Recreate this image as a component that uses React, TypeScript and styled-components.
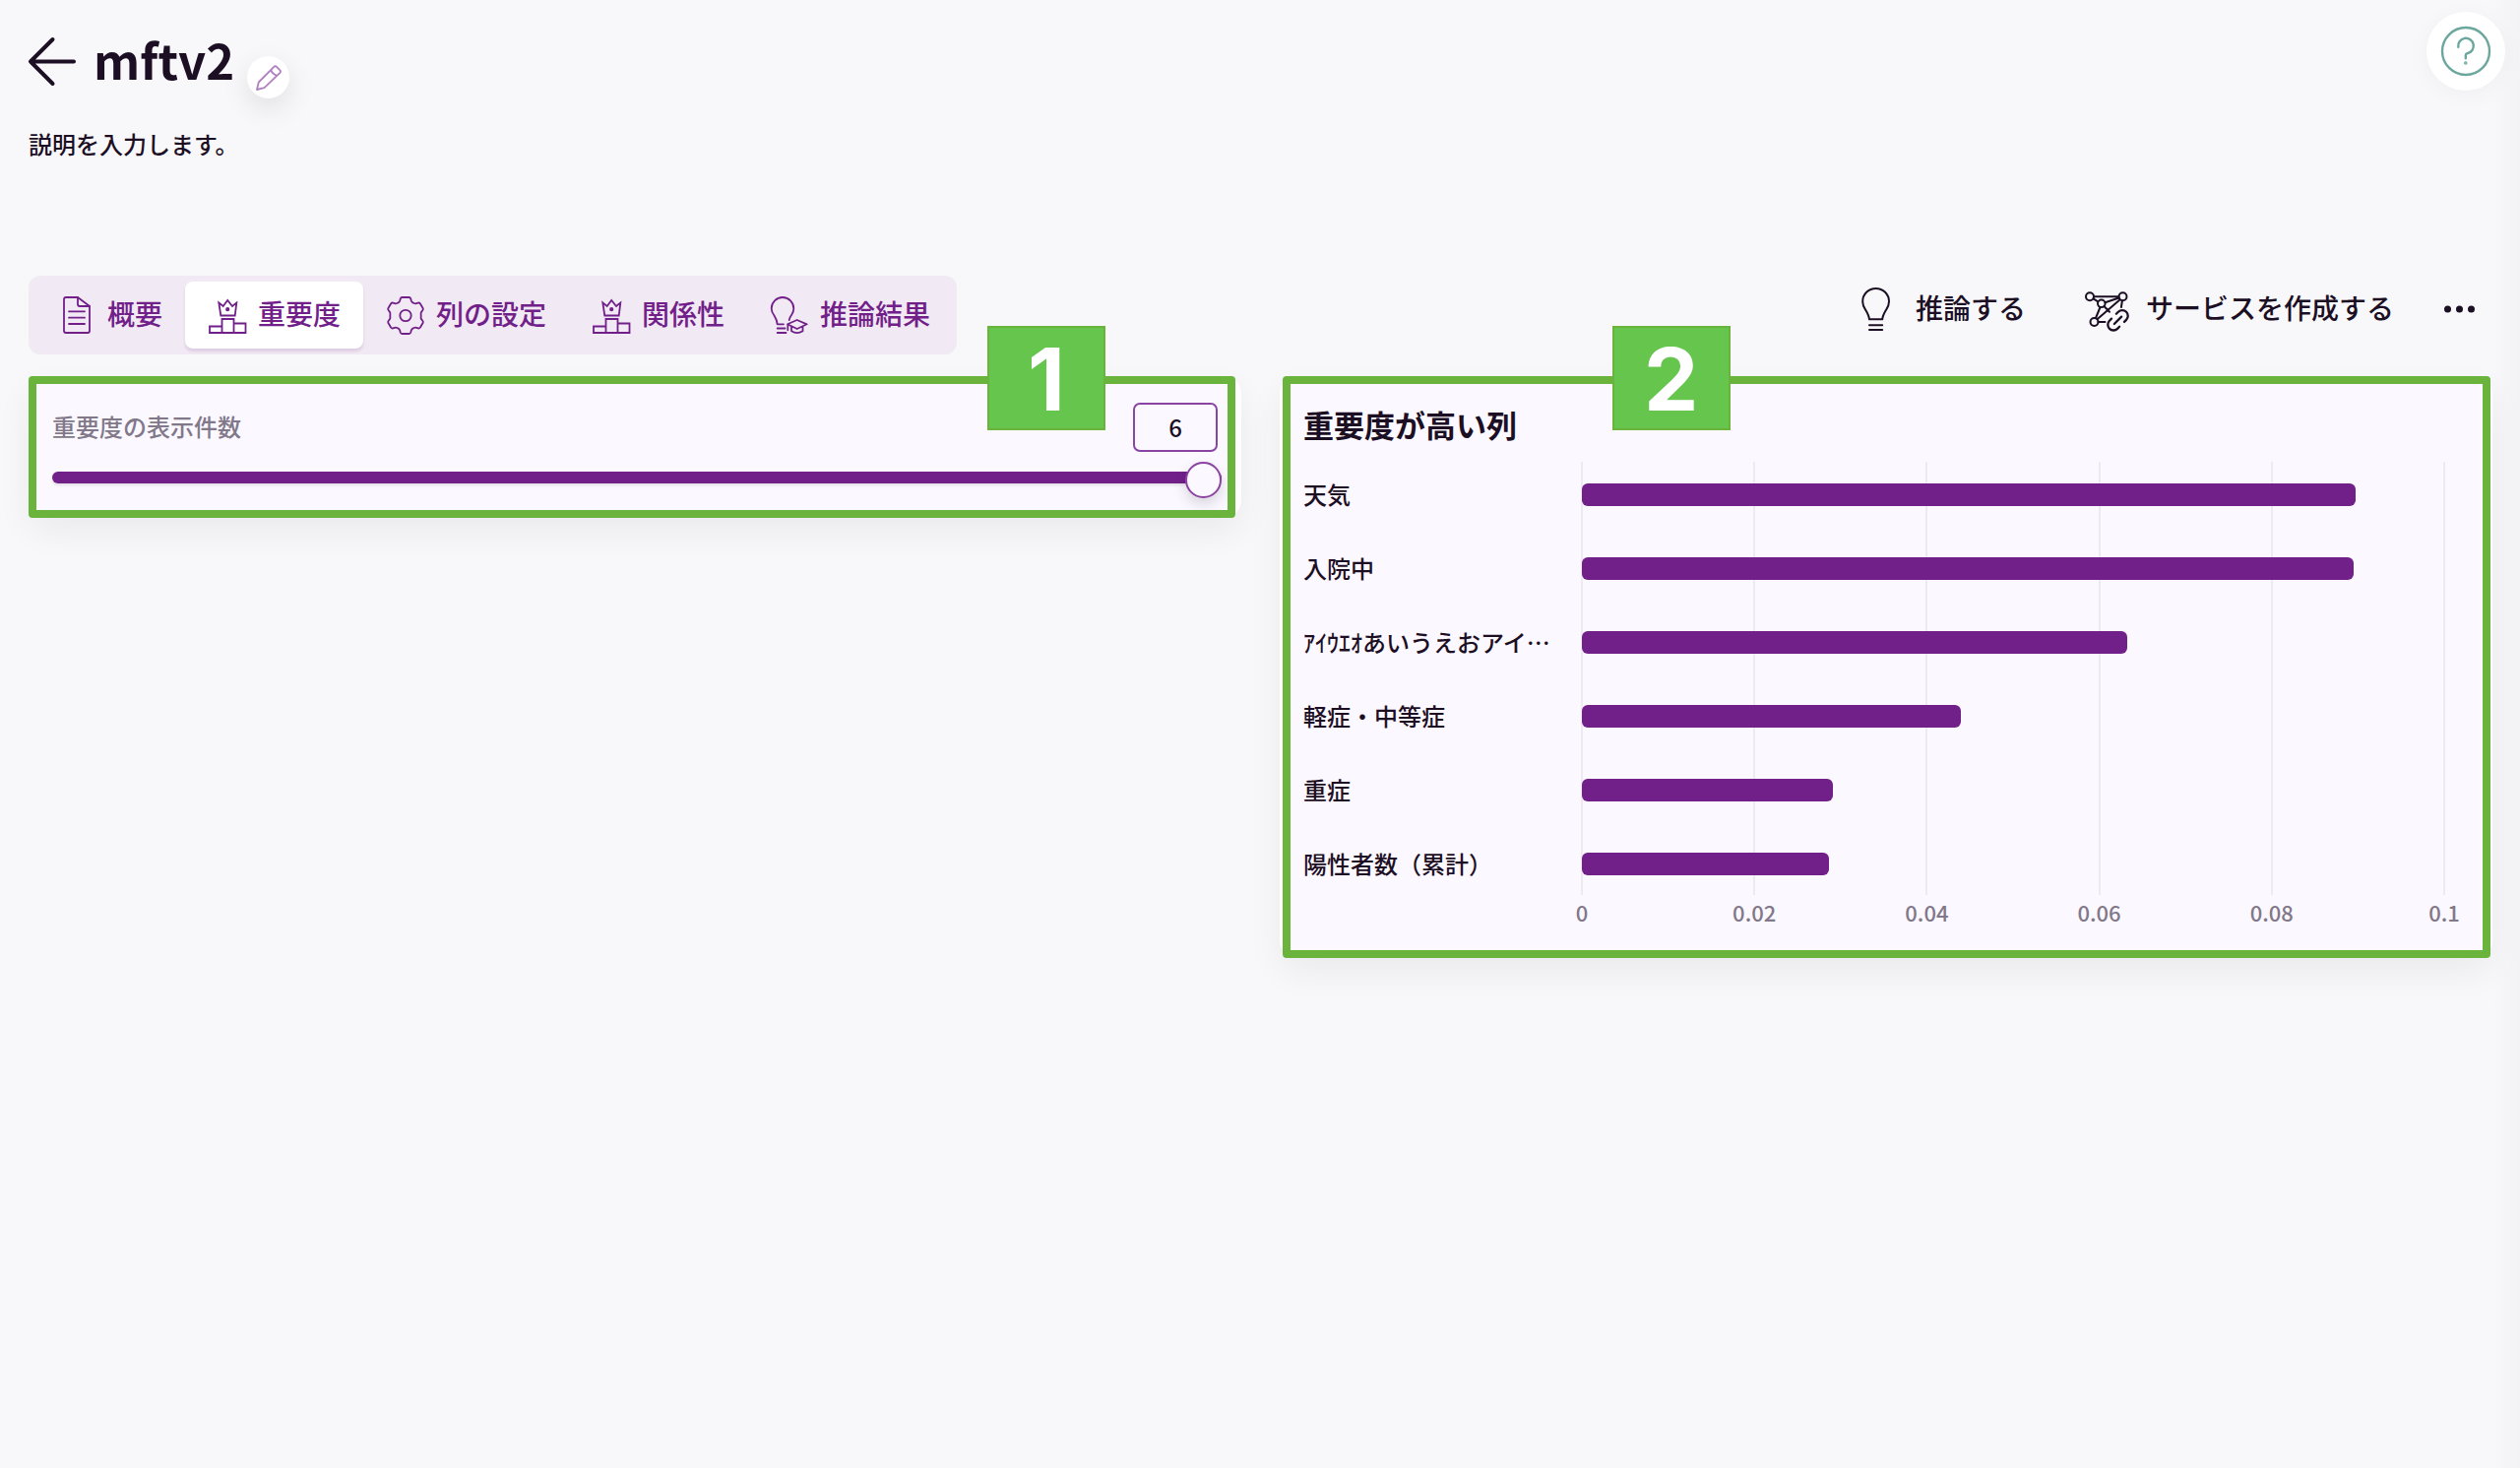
import React, { useState } from 'react';
import styled, { createGlobalStyle } from 'styled-components';

const color = {
  page: '#f8f8fb',
  card: '#fcf8ff',
  ink: '#1c0f24',
  muted: '#81788a',
  purple: '#71208a',
  tabs: '#f1e9f3',
  line: '#efeaf1',
  frame: '#6ab43e',
  badge: '#66c54d',
  teal: '#6ba79d',
};

const GlobalStyle = createGlobalStyle`
  *, *::before, *::after { box-sizing: border-box; }
  body {
    margin: 0;
    min-height: 100vh;
    background: linear-gradient(to left, #f3f3f5, ${color.page} 28px);
    color: ${color.ink};
    font-family: "Noto Sans CJK JP", "Noto Sans", sans-serif;
    font-weight: 500;
  }
  button, input { font: inherit; color: inherit; }
  button { border: 0; padding: 0; background: none; cursor: pointer; }
  h1, h2, p, ul { margin: 0; padding: 0; }
`;

const Page = styled.main`
  padding: 12px 28px 40px 29px;
`;

const Header = styled.header`
  display: flex;
  justify-content: space-between;
  align-items: flex-start;
  margin-right: -13px;
`;

const Heading = styled.div`
  padding-top: 11px;
`;

const TitleRow = styled.div`
  display: flex;
  align-items: center;
  height: 77px;
`;

const BackButton = styled.button`
  display: flex;
  width: 50px;
  height: 50px;
  margin-right: 16px;
`;

const Title = styled.h1`
  font-size: 49px;
  line-height: 72px;
  font-weight: 700;
  padding-bottom: 4px;
`;

const EditButton = styled.button`
  display: flex;
  align-items: center;
  justify-content: center;
  align-self: flex-end;
  width: 43px;
  height: 43px;
  margin-left: 13px;
  border-radius: 50%;
  background: #fff;
  box-shadow: 0 10px 28px rgba(0, 0, 0, 0.1);
`;

const Description = styled.p`
  margin-top: 28px;
  font-size: 24px;
  line-height: 36px;
`;

const HelpButton = styled.button`
  width: 80px;
  height: 80px;
  border-radius: 50%;
  background: #fff;
  box-shadow: 0 4px 24px rgba(0, 0, 0, 0.04);
`;

const Toolbar = styled.div`
  display: flex;
  justify-content: space-between;
  align-items: flex-start;
  margin-top: 116px;
`;

const Tabs = styled.nav`
  display: flex;
  height: 80px;
  padding: 6px 4px 6px 6px;
  border-radius: 12px;
  background: ${color.tabs};
`;

const Tab = styled.button<{ $active: boolean }>`
  display: flex;
  align-items: center;
  gap: 12px;
  padding: 0 23px 0 24px;
  border-radius: 8px;
  color: ${color.purple};
  background: ${(p) => (p.$active ? '#fff' : 'transparent')};
  box-shadow: ${(p) => (p.$active ? '0 3px 3px rgba(113, 32, 138, 0.14)' : 'none')};
`;

const Caption = styled.span`
  font-size: 28px;
  line-height: 40px;
  padding-bottom: 4px;
  white-space: nowrap;
`;

const Actions = styled.div`
  display: flex;
  align-items: center;
  height: 68px;
  padding-right: 11px;
`;

const Action = styled.button`
  display: flex;
  align-items: center;
  gap: 18px;
  margin-right: 60px;

  &:nth-last-child(2) { margin-right: 45px; }
`;

const MoreButton = styled.button`
  display: flex;
  width: 44px;
  height: 44px;
`;

const Panels = styled.div`
  display: grid;
  grid-template-columns: 1fr 1fr;
  align-items: start;
  gap: 39px;
  margin-top: 22px;
`;

const Card = styled.section`
  position: relative;
  border: 6px solid #fff;
  border-radius: 18px;
  background: ${color.card};
  box-shadow: 0 14px 36px rgba(0, 0, 0, 0.06);
`;

const CountCard = styled(Card)`
  padding: 21px 14px 13px 18px;
`;

const ChartCard = styled(Card)`
  padding: 27px 43px 28px 18px;
`;

const Frame = styled.div<{ $left: number; $right: number }>`
  position: absolute;
  top: -6px;
  bottom: -6px;
  left: ${(p) => p.$left - 6}px;
  right: ${(p) => p.$right - 6}px;
  border: 8px solid ${color.frame};
  border-radius: 4px;
  pointer-events: none;
`;

const Badge = styled.span<{ $left: string }>`
  position: absolute;
  top: -57px;
  left: ${(p) => p.$left};
  width: 120px;
  height: 106px;
  border: 2px solid ${color.frame};
  background: ${color.badge};
  color: #fff;
  font-family: Inter, "Liberation Sans", Arial, sans-serif;
  font-size: 88px;
  font-weight: 700;
  line-height: 104px;
  text-align: center;
`;

const CountRow = styled.div`
  display: flex;
  justify-content: space-between;
  align-items: center;
  height: 50px;
  padding-right: 4px;
`;

const CountLabel = styled.label`
  padding-bottom: 2px;
  font-size: 24px;
  line-height: 36px;
  color: ${color.muted};
`;

const CountInput = styled.input`
  width: 86px;
  height: 50px;
  padding: 0 0 2px;
  border: 2px solid #8a44a2;
  border-radius: 7px;
  background: transparent;
  font-size: 24px;
  text-align: center;
  outline: none;
`;

const Slider = styled.input`
  appearance: none;
  display: block;
  width: 100%;
  height: 30px;
  margin: 11px 0 7px;
  background: none;
  outline: none;

  &::-webkit-slider-runnable-track {
    height: 12px;
    border-radius: 6px;
    background: ${color.purple};
    box-shadow: 0 2px 3px rgba(0, 0, 0, 0.1);
  }

  &::-webkit-slider-thumb {
    appearance: none;
    width: 37px;
    height: 37px;
    margin-top: -10px;
    border: 2px solid #8a44a2;
    border-radius: 50%;
    background: ${color.card};
    box-shadow: 0 6px 14px rgba(0, 0, 0, 0.14);
  }
`;

const ChartTitle = styled.h2`
  font-size: 31px;
  line-height: 32px;
  font-weight: 700;
`;

const Chart = styled.div`
  display: grid;
  grid-template-columns: 283px 1fr;
  margin-top: 18px;
`;

const Names = styled.ul`
  list-style: none;
`;

const Name = styled.li`
  height: 75px;
  font-size: 24px;
  line-height: 73px;
  white-space: nowrap;
`;

const Plot = styled.div`
  position: relative;
`;

const GridLines = styled.div`
  position: absolute;
  inset: 4px -1px 6px -1px;
  display: flex;
  justify-content: space-between;
`;

const GridLine = styled.span`
  width: 2px;
  background: ${color.line};
`;

const BarRow = styled.div`
  position: relative;
  display: flex;
  align-items: center;
  height: 75px;
`;

const Bar = styled.div`
  height: 23px;
  border-radius: 6px;
  background: ${color.purple};
`;

const Axis = styled.div`
  grid-column: 2;
  display: flex;
  justify-content: space-between;
  height: 24px;
  font-size: 22px;
  line-height: 22px;
  color: ${color.muted};
`;

const Tick = styled.span`
  display: flex;
  justify-content: center;
  width: 0;
`;

const Icon = ({ size = 38, width = 1.8, children }: { size?: number; width?: number; children: React.ReactNode }) => (
  <svg
    width={size}
    height={size}
    viewBox={`0 0 ${size} ${size}`}
    fill="none"
    stroke="currentColor"
    strokeWidth={width}
    strokeLinecap="round"
    strokeLinejoin="round"
    overflow="visible"
    aria-hidden="true"
  >
    {children}
  </svg>
);

const DocumentIcon = () => (
  <Icon>
    <path d="M8 1H20L32 10V35Q32 37 30 37H8Q6 37 6 35V3Q6 1 8 1Z" />
    <path d="M20 1V8Q20 10 22 10H32M11 15.3H27M11 21.7H27M11 28H27" />
  </Icon>
);

const PodiumIcon = () => (
  <Icon>
    <path d="M13.5 37V23H25.5V37M13.5 30.5H1V37H37.5V27.5H25.5" strokeLinejoin="miter" />
    <path d="M10.3 6.5L14.7 10L19.2 4L24 10L28.3 6.5L26.7 19.5H12.3Z" strokeLinejoin="miter" />
    <circle cx="19.2" cy="13.2" r="1.2" fill="currentColor" />
  </Icon>
);

const GearIcon = () => (
  <Icon>
    <path d="M15.5 1H22.5Q23.8 1 24.2 2.2L24.8 4.5Q25.2 5.8 26.4 6.4L27.6 7Q28.8 7.6 30 7.2L31.8 6.6Q33 6.3 33.8 7.3L36.6 12Q37.3 13.2 36.3 14.2L35.2 15.6Q34.4 16.6 34.6 18Q34.8 19.5 34.6 21Q34.4 22.4 35.2 23.4L36.3 24.8Q37.3 25.8 36.6 27L33.8 31.7Q33 32.7 31.8 32.4L30 31.8Q28.8 31.4 27.6 32L26.4 32.6Q25.2 33.2 24.8 34.5L24.2 36.8Q23.8 38 22.5 38H15.5Q14.2 38 13.8 36.8L13.2 34.5Q12.8 33.2 11.6 32.6L10.4 32Q9.2 31.4 8 31.8L6.2 32.4Q5 32.7 4.2 31.7L1.4 27Q.7 25.8 1.7 24.8L2.8 23.4Q3.6 22.4 3.4 21Q3.2 19.5 3.4 18Q3.6 16.6 2.8 15.6L1.7 14.2Q.7 13.2 1.4 12L4.2 7.3Q5 6.3 6.2 6.6L8 7.2Q9.2 7.6 10.4 7L11.6 6.4Q12.8 5.8 13.2 4.5L13.8 2.2Q14.2 1 15.5 1Z" />
    <circle cx="19" cy="19.5" r="5.7" />
  </Icon>
);

const ResultIcon = () => (
  <Icon>
    <path d="M13 28.3H6.7Q6.3 24 3.5 19.5Q.7 16 .7 12.3A11.3 11.3 0 0 1 23.3 12.3Q23.3 15.5 21.3 18.5Q19.3 21.3 18.7 24" />
    <path d="M6.7 32.5H14.5M6.7 37H15.5" />
    <path d="M17 28.3L26.7 24L36.7 28.3L26.7 33ZM17.3 28.5V34.3M21 30.5V35.3Q26.7 39 32.5 35.3V30.5" />
  </Icon>
);

const BulbIcon = () => (
  <Icon size={44} width={2}>
    <path d="M15 32.3Q14.6 28.5 11.2 22.8Q8.2 18.8 8.2 14.3A13.4 13.4 0 0 1 35 14.3Q35 18.8 32 22.8Q28.6 28.5 28.2 32.3Z" />
    <path d="M15 38.3H28.2M15 43H28.2" />
  </Icon>
);

const ServiceIcon = () => (
  <Icon size={44} width={2}>
    <circle cx="5" cy="9.3" r="4" />
    <circle cx="38.5" cy="9.3" r="4" />
    <circle cx="16.8" cy="16.3" r="3.8" />
    <circle cx="9.5" cy="35" r="4" />
    <path d="M9 9.3H34.5M8.5 11.3L13.3 14.3M20.5 15.2L34.7 10.5M15.5 20L11 31M35.7 12.2L12.5 32.2M19.5 19L25 24.7M13.5 35H20.5M37.9 13.5L36.9 20" />
    <g transform="translate(33.5 33.3) rotate(-45) scale(1.15)">
      <path d="M-3 5H-5.5A5 5 0 0 1 -5.5 -5H-3M3 -5H5.5A5 5 0 0 1 5.5 5H3M-4.5 0H4.5" />
    </g>
  </Icon>
);

const TABS = [
  { name: '概要', icon: <DocumentIcon /> },
  { name: '重要度', icon: <PodiumIcon /> },
  { name: '列の設定', icon: <GearIcon /> },
  { name: '関係性', icon: <PodiumIcon /> },
  { name: '推論結果', icon: <ResultIcon /> },
];

const COLUMNS = [
  { name: '天気', value: 0.0897 },
  { name: '入院中', value: 0.0895 },
  { name: 'ｱｲｳｴｵあいうえおアイ…', value: 0.0632 },
  { name: '軽症・中等症', value: 0.044 },
  { name: '重症', value: 0.0291 },
  { name: '陽性者数（累計）', value: 0.0286 },
];

const TICKS = [0, 0.02, 0.04, 0.06, 0.08, 0.1];
const MAX = 0.1;

export default function App() {
  const [tab, setTab] = useState('重要度');
  const [count, setCount] = useState(6);
  const shown = COLUMNS.slice(0, count);
  const change = (e: React.ChangeEvent<HTMLInputElement>) => setCount(Number(e.target.value));

  return (
    <>
      <GlobalStyle />
      <Page lang="ja">
        <Header>
          <Heading>
            <TitleRow>
              <BackButton aria-label="戻る">
                <Icon size={50} width={4}>
                  <path d="M46 25.5H2.5M24.5 3L2 25.5L24.5 48" />
                </Icon>
              </BackButton>
              <Title>mftv2</Title>
              <EditButton aria-label="編集">
                <svg width="26" height="26" viewBox="0 0 26 26" fill="none" stroke="#b07fc1" strokeWidth="1.8" strokeLinejoin="round" aria-hidden="true">
                  <path d="M1 25L2.8 17.5L18.3 1.8Q19.7 .6 21 1.8L24.5 5.3Q25.5 6.5 24.5 7.8L8.5 23.2Z" />
                  <path d="M15.3 5Q16 8.5 21 10.8" />
                </svg>
              </EditButton>
            </TitleRow>
            <Description>説明を入力します。</Description>
          </Heading>
          <HelpButton aria-label="ヘルプ">
            <svg width="80" height="80" viewBox="0 0 80 80" fill="none" stroke={color.teal} strokeWidth="2.4" strokeLinecap="round" aria-hidden="true">
              <circle cx="40" cy="40" r="24" />
              <path d="M32.3 35.7A7.8 7.8 0 1 1 41.5 42.2Q39.8 42.5 39.8 44V47.3" />
              <circle cx="39.8" cy="52" r="0.6" fill={color.teal} />
            </svg>
          </HelpButton>
        </Header>

        <Toolbar>
          <Tabs>
            {TABS.map((t) => (
              <Tab key={t.name} $active={t.name === tab} onClick={() => setTab(t.name)}>
                {t.icon}
                <Caption>{t.name}</Caption>
              </Tab>
            ))}
          </Tabs>
          <Actions>
            <Action>
              <BulbIcon />
              <Caption>推論する</Caption>
            </Action>
            <Action>
              <ServiceIcon />
              <Caption>サービスを作成する</Caption>
            </Action>
            <MoreButton aria-label="その他">
              <svg width="44" height="44" viewBox="0 0 44 44" fill="currentColor" aria-hidden="true">
                <circle cx="9.5" cy="22" r="3.5" />
                <circle cx="21.5" cy="22" r="3.5" />
                <circle cx="33.5" cy="22" r="3.5" />
              </svg>
            </MoreButton>
          </Actions>
        </Toolbar>

        <Panels>
          <CountCard>
            <CountRow>
              <CountLabel htmlFor="count">重要度の表示件数</CountLabel>
              <CountInput id="count" inputMode="numeric" value={count} onChange={change} />
            </CountRow>
            <Slider type="range" min={1} max={6} value={count} onChange={change} aria-label="重要度の表示件数" />
            <Frame $left={0} $right={6} />
            <Badge $left="calc(80% - 8px)">1</Badge>
          </CountCard>

          <ChartCard>
            <ChartTitle>重要度が高い列</ChartTitle>
            <Chart>
              <Names>
                {shown.map((c) => (
                  <Name key={c.name}>{c.name}</Name>
                ))}
              </Names>
              <Plot>
                <GridLines>
                  {TICKS.map((t) => (
                    <GridLine key={t} />
                  ))}
                </GridLines>
                {shown.map((c) => (
                  <BarRow key={c.name}>
                    <Bar style={{ width: `${(c.value / MAX) * 100}%` }} />
                  </BarRow>
                ))}
              </Plot>
              <Axis>
                {TICKS.map((t) => (
                  <Tick key={t}>{t}</Tick>
                ))}
              </Axis>
            </Chart>
            <Frame $left={3} $right={2} />
            <Badge $left="calc(28% - 10px)">2</Badge>
          </ChartCard>
        </Panels>
      </Page>
    </>
  );
}
